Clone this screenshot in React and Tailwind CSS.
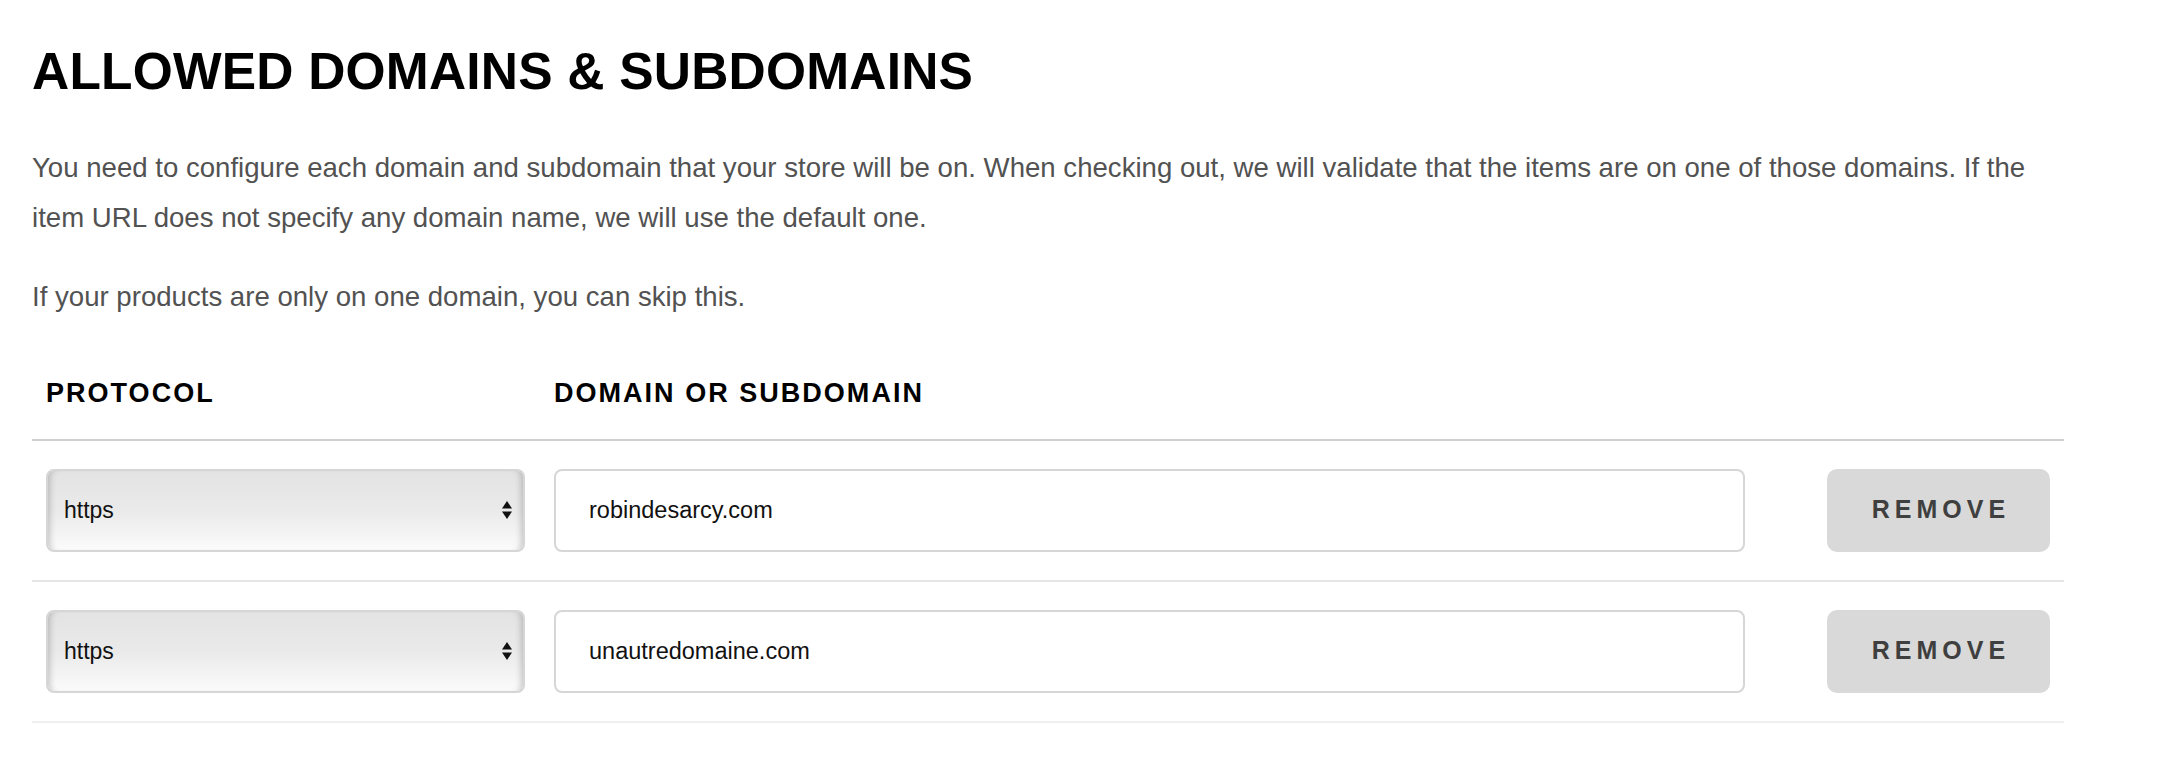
import React from 'react'

const domains = ['robindesarcy.com', 'unautredomaine.com']

function ProtocolSelect() {
  return (
    <div className="relative w-[479px] h-[83px]">
      <select
        defaultValue="https"
        className="appearance-none w-full h-full rounded-[8px] border-2 border-[#d6d6d6] bg-gradient-to-b from-[#e3e3e3] via-[#eaeaea] to-[#fbfbfb] pl-[16px] text-[23px] text-[#111] shadow-[inset_7px_0_6px_-5px_rgba(0,0,0,0.2),inset_-7px_0_6px_-5px_rgba(0,0,0,0.2)] outline-none"
      >
        <option value="http">http</option>
        <option value="https">https</option>
      </select>
      {/* up / down arrows */}
      <svg
        className="pointer-events-none absolute right-[13px] top-1/2 -translate-y-1/2"
        width="10"
        height="18"
        viewBox="0 0 10 18"
      >
        <path d="M5 0 L10 7.5 L0 7.5 Z" fill="#111" />
        <path d="M0 10.5 L10 10.5 L5 18 Z" fill="#111" />
      </svg>
    </div>
  )
}

function DomainRow({ domain, last }) {
  return (
    <div
      className={
        'flex items-center pt-[28px] pb-[28px] border-b-2 ' +
        (last ? 'border-[#efefef]' : 'border-[#e6e6e6]')
      }
    >
      <div className="pl-[14px] w-[522px] shrink-0">
        <ProtocolSelect />
      </div>
      <div className="w-[1191px] shrink-0">
        <input
          type="text"
          defaultValue={domain}
          className="w-full h-[83px] rounded-[8px] border-2 border-[#d6d6d6] bg-white px-[33px] text-[23.5px] text-[#111] outline-none"
        />
      </div>
      <div className="flex-1 flex justify-end pr-[14px]">
        <button className="w-[223px] h-[83px] rounded-[10px] bg-[#d9d9d9] pl-[5px] text-[25px] font-bold tracking-[0.2em] text-[#3f3f3f]">
          REMOVE
        </button>
      </div>
    </div>
  )
}

export default function App() {
  return (
    <div className="min-h-[764px] bg-white font-['Liberation_Sans',Arial,sans-serif]">
      <div className="w-[2064px] pl-[32px] pt-[46px]">
        <h1 className="text-[51.5px] leading-none font-bold tracking-[0.2px] text-black">
          ALLOWED DOMAINS &amp; SUBDOMAINS
        </h1>

        <p className="mt-[45px] text-[27.6px] leading-[50px] text-[#525252] whitespace-nowrap">
          You need to configure each domain and subdomain that your store will be on. When checking out, we will validate that the items are on one of those domains. If the
          <br />
          item URL does not specify any domain name, we will use the default one.
        </p>
        <p className="mt-[29px] text-[27.6px] leading-[50px] text-[#525252]">
          If your products are only on one domain, you can skip this.
        </p>

        {/* table */}
        <div className="mt-[58px]">
          <div className="flex pb-[32px] border-b-2 border-[#d0d0d0] text-[27px] leading-none font-bold tracking-[0.075em] text-black">
            <div className="pl-[14px] w-[522px] shrink-0">PROTOCOL</div>
            <div>DOMAIN OR SUBDOMAIN</div>
          </div>
          {domains.map((d, i) => (
            <DomainRow key={d} domain={d} last={i === domains.length - 1} />
          ))}
        </div>
      </div>
    </div>
  )
}
